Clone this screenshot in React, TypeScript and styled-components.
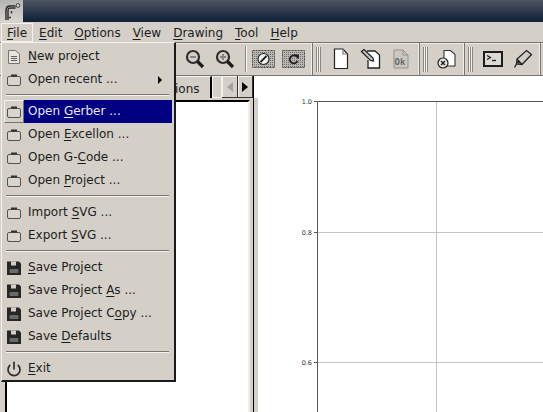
import React from "react";
import styled, { createGlobalStyle } from "styled-components";
import { Power } from "lucide-react";

const GlobalStyle = createGlobalStyle`
  html, body {
    margin: 0;
    padding: 0;
    background: #d4d0c8;
    overflow: hidden;
  }
`;

const Page = styled.div`
  position: relative;
  width: 543px;
  height: 412px;
  display: flex;
  flex-direction: column;
  overflow: hidden;
  background: #d4d0c8;
  color: #1c1c1c;
  font-family: "DejaVu Sans", sans-serif;
  font-size: 12px;
`;

const TitleBar = styled.div`
  height: 22px;
  flex: none;
  background: linear-gradient(#4c5563, #15243a 90%);
`;

const LogoBox = styled.div`
  width: 23px;
  height: 22px;
  display: flex;
  align-items: center;
  justify-content: center;
  background: linear-gradient(#b5b5b3, #d8d5cf);
`;

const MenuBar = styled.div`
  height: 20px;
  flex: none;
  display: flex;
  align-items: center;
  padding-left: 1px;
  box-sizing: border-box;
`;

const MenuTitle = styled.div<{ $open?: boolean }>`
  height: 19px;
  line-height: 18px;
  padding: 0 5px;
  box-sizing: border-box;
  border: 1px solid ${(p) => (p.$open ? "#f4f2ee" : "transparent")};
`;

const Key = styled.span`
  text-decoration: underline;
  text-underline-offset: 2px;
`;

const Toolbar = styled.div`
  height: 34px;
  flex: none;
  display: flex;
  box-sizing: border-box;
  border-top: 1px solid #77756f;
  border-bottom: 1px solid #77756f;
  box-shadow: inset 0 1px 0 #eceae6;
`;

const ToolGroup = styled.div<{ $width: number }>`
  width: ${(p) => p.$width}px;
  flex: none;
  display: flex;
  align-items: center;
  justify-content: flex-end;
  box-sizing: border-box;
  border-right: 1px solid #77756f;
  box-shadow: inset -1px 0 0 #f2f0ec;
`;

const Handle = styled.div`
  width: 5px;
  height: 25px;
  flex: none;
  margin: 0 auto 0 3px;
  background: linear-gradient(
    to right,
    #8a8882 20%,
    #f6f4f0 20% 40%,
    #8a8882 40% 60%,
    #f6f4f0 60% 80%,
    #8a8882 80%
  );
`;

const ToolButton = styled.div<{ $width?: number }>`
  width: ${(p) => p.$width ?? 30}px;
  height: 28px;
  flex: none;
  display: flex;
  align-items: center;
  justify-content: center;
`;

const ToolSeparator = styled.div`
  width: 2px;
  height: 26px;
  flex: none;
  margin: 0 1px 0 5px;
  background: linear-gradient(to right, #8a8882 50%, #f8f7f4 50%);
`;

const Workspace = styled.div`
  flex: 1;
  display: flex;
  min-height: 0;
`;

const LeftPanel = styled.div`
  width: 254px;
  flex: none;
  display: flex;
  flex-direction: column;
  box-sizing: border-box;
  border-right: 1px solid #000;
`;

const TabRow = styled.div`
  height: 22px;
  flex: none;
  display: flex;
  justify-content: flex-end;
`;

const Tab = styled.div`
  width: 70px;
  height: 22px;
  line-height: 24px;
  box-sizing: border-box;
  padding-left: 33px;
  border-top: 1px solid #f4f2ee;
  border-right: 2px solid #000;
  overflow: hidden;
  white-space: nowrap;
`;

const TabStub = styled.div`
  width: 10px;
  height: 22px;
  box-sizing: border-box;
  border: 1px solid #f4f2ee;
  border-bottom-color: #f4f2ee;
`;

const ScrollButton = styled.div<{ $width: number }>`
  width: ${(p) => p.$width}px;
  height: 22px;
  display: flex;
  align-items: center;
  justify-content: center;
  box-sizing: border-box;
  border-bottom: 1px solid #333;
  border-right: 1px solid #333;
  box-shadow: inset 1px 1px 0 #f4f2ee;
`;

const Arrow = styled.div<{ $dim?: boolean; $left?: boolean }>`
  width: 0;
  height: 0;
  border-top: 5px solid transparent;
  border-bottom: 5px solid transparent;
  border-${(p) => (p.$left ? "right" : "left")}: 6px solid
    ${(p) => (p.$dim ? "#a3a19c" : "#000")};
`;

const TreeView = styled.div`
  flex: 1;
  margin: 2px 3px 0 5px;
  background: #fff;
  box-sizing: border-box;
  border-top: 2px solid #000;
  border-left: 2px solid #000;
  border-right: 2px solid #f0eeea;
`;

const PlotArea = styled.div`
  flex: 1;
  min-width: 0;
  display: flex;
  flex-direction: column;
  background: #fff;
`;

const PlotHeader = styled.div`
  height: 22px;
  flex: none;
`;

const PlotBody = styled.div`
  flex: 1;
  min-height: 0;
  border-left: 4px solid #d4d0c8;
  overflow: hidden;
`;

const Menu = styled.div`
  position: absolute;
  left: 1px;
  top: 42px;
  width: 175px;
  height: 340px;
  box-sizing: border-box;
  padding: 2px 2px 0 2px;
  background: #d4d0c8;
  border: 1px solid;
  border-color: #f4f2ee #1a1a1a #1a1a1a #f4f2ee;
  border-width: 1px 2px 2px 1px;
`;

const Row = styled.div`
  height: 23px;
  display: flex;
  align-items: center;
`;

const IconCell = styled.div<{ $raised?: boolean }>`
  width: 20px;
  height: 23px;
  flex: none;
  display: flex;
  align-items: center;
  justify-content: center;
  box-sizing: border-box;
  border: 1px solid ${(p) => (p.$raised ? "#f4f2ee" : "transparent")};
  border-right-color: ${(p) => (p.$raised ? "#77756f" : "transparent")};
  border-bottom-color: ${(p) => (p.$raised ? "#77756f" : "transparent")};
`;

const Label = styled.div<{ $active?: boolean }>`
  flex: 1;
  height: 23px;
  line-height: 23px;
  padding-left: 4px;
  display: flex;
  justify-content: space-between;
  align-items: center;
  white-space: nowrap;
  color: ${(p) => (p.$active ? "#e8e8f4" : "#1c1c1c")};
  background: ${(p) => (p.$active ? "#000080" : "transparent")};
`;

const SubArrow = styled.div`
  width: 0;
  height: 0;
  margin-right: 10px;
  border-top: 4px solid transparent;
  border-bottom: 4px solid transparent;
  border-left: 4px solid #000;
`;

const Separator = styled.div`
  height: 2px;
  margin: 3px 3px 4px 2px;
  background: linear-gradient(#77756f 50%, #f4f2ee 50%);
`;

const TickLabel = styled.text`
  font-family: "DejaVu Sans", sans-serif;
  font-size: 6.5px;
  fill: #333;
  text-anchor: end;
`;

const FolderIcon = () => (
  <svg width="16" height="14" viewBox="0 0 16 14" fill="none">
    <rect x="1.5" y="3.5" width="13" height="9" rx="1.5" fill="#d8d5ce" stroke="#55534f" />
    <rect x="5" y="1.5" width="6" height="2" fill="#33322f" />
  </svg>
);

const DocIcon = () => (
  <svg width="14" height="16" viewBox="0 0 14 16" fill="none">
    <path d="M1.5 1.5 H8.5 L12.5 5 V14.5 H1.5 Z" fill="#e6e4df" stroke="#77756f" />
    <path d="M4 7.5 H10 M4 9.5 H10 M4 11.5 H10" stroke="#5e5c58" />
  </svg>
);

const FloppyIcon = () => (
  <svg width="16" height="16" viewBox="0 0 16 16">
    <path d="M1 1.5 H13 L15 3.5 V15 H1 Z" fill="#262626" />
    <rect x="5" y="1.5" width="5" height="4" fill="#d4d0c8" />
    <rect x="3.5" y="9" width="9" height="4" rx="1" fill="#6a6a68" />
  </svg>
);

const ZoomIcon = ({ plus }: { plus?: boolean }) => (
  <svg width="20" height="20" viewBox="0 0 20 20" fill="none">
    <circle cx="8" cy="8" r="6" stroke="#2e2e2e" strokeWidth="2.2" fill="#d4d0c8" />
    <path d="M12.5 12.5 L18 18" stroke="#1c1c1c" strokeWidth="3.2" />
    <path d={plus ? "M5 8 H11 M8 5 V11" : "M5 8 H11"} stroke="#85837e" strokeWidth="2" />
  </svg>
);

const ScreenIcon = ({ kind }: { kind: "cancel" | "replot" }) => (
  <svg width="23" height="18" viewBox="0 0 23 18" fill="none">
    <defs>
      <pattern id={`stipple-${kind}`} width="2" height="2" patternUnits="userSpaceOnUse">
        <rect width="2" height="2" fill="#b9b7b2" />
        <rect width="1" height="1" fill="#6e6d69" />
      </pattern>
    </defs>
    <rect x="0.5" y="0.5" width="22" height="17" fill={`url(#stipple-${kind})`} stroke="#4a4a48" strokeDasharray="2 1" />
    {kind === "cancel" ? (
      <>
        <circle cx="11.5" cy="9" r="5.5" fill="#f2f2f0" stroke="#222" strokeWidth="1.2" />
        <path d="M8.5 12 L14.5 6" stroke="#222" strokeWidth="1.8" />
      </>
    ) : (
      <path d="M15 7 A4 4 0 1 0 15.5 11 M12.5 5.5 H16 V8.5" stroke="#1c1c1c" strokeWidth="1.8" />
    )}
  </svg>
);

const PageIcon = () => (
  <svg width="16" height="22" viewBox="0 0 16 22" fill="#fff" stroke="#222" strokeWidth="1.2">
    <path d="M1.5 1 H10 L14.5 6 V20.5 H1.5 Z" />
    <path d="M10 1 V6 H14.5" fill="none" stroke="#777" />
  </svg>
);

const EditPageIcon = () => (
  <svg width="22" height="22" viewBox="0 0 22 22" fill="none">
    <path d="M7 3 H15 L19.5 7 V20 H8 V12" fill="#fff" stroke="#222" strokeWidth="1.3" />
    <path d="M1.5 3.5 L4 1.5 L13 10 L13.5 13 L10.5 12.5 Z" fill="#c8c6c0" stroke="#222" strokeWidth="1.3" />
  </svg>
);

const OkPageIcon = () => (
  <svg width="16" height="20" viewBox="0 0 16 20">
    <path d="M1 1 H10 L15 6 V19 H1 Z" fill="#c9c7c1" stroke="#95938d" />
    <path d="M10 1 V6 H15" fill="none" stroke="#95938d" />
    <text x="1.5" y="16" fontFamily="DejaVu Sans Mono" fontWeight="700" fontSize="9" fill="#6b6964">Ok</text>
  </svg>
);

const ClosePageIcon = () => (
  <svg width="20" height="20" viewBox="0 0 20 20" fill="none">
    <path d="M7 10 V1.5 H13.5 L18 5.5 V17 H10" fill="#fff" stroke="#333" strokeWidth="1.1" />
    <circle cx="6" cy="14" r="5" fill="#e8e6e1" stroke="#222" strokeWidth="1.2" />
    <path d="M4 12 L8 16 M8 12 L4 16" stroke="#222" strokeWidth="1.5" />
  </svg>
);

const TerminalIcon = () => (
  <svg width="20" height="16" viewBox="0 0 20 16" fill="none">
    <rect x="1" y="1" width="18" height="14" stroke="#1c1c1c" strokeWidth="2" fill="#dcdad4" />
    <path d="M4 4.5 L7.5 6.5 L4 8.5" stroke="#1c1c1c" strokeWidth="1.2" />
    <path d="M9 9.5 H13" stroke="#1c1c1c" strokeWidth="1.3" />
  </svg>
);

const PenIcon = () => (
  <svg width="20" height="20" viewBox="0 0 20 20" fill="none">
    <path d="M13.5 1.5 L18.5 5.5 L9 15.5 L3.5 15 L4 10 Z" fill="#cfcdc7" stroke="#222" strokeWidth="1.3" />
    <path d="M3.5 15 L1.5 18.5 M4 10 L9 15.5" stroke="#222" strokeWidth="1.3" />
    <circle cx="5.5" cy="13" r="1.5" fill="#222" />
  </svg>
);

const Logo = () => (
  <svg width="18" height="19" viewBox="0 0 18 19" fill="none">
    <path d="M4 18 V8 Q4 5 7 5 H12.5" stroke="#262626" strokeWidth="3.4" />
    <path d="M4 18 V8 Q4 5 7 5 H12.5" stroke="#8f8e8b" strokeWidth="1" />
    <path d="M8 15.5 H6 M8.5 9 V11.5" stroke="#333" strokeWidth="1.4" />
    <circle cx="15" cy="3.5" r="1.8" fill="#e8e6e2" stroke="#333" />
  </svg>
);

type MenuEntry =
  | { sep: true }
  | {
      icon: "folder" | "doc" | "floppy" | "power";
      before: string;
      key: string;
      after: string;
      active?: boolean;
      submenu?: boolean;
    };

const entries: MenuEntry[] = [
  { icon: "doc", before: "", key: "N", after: "ew project" },
  { icon: "folder", before: "Open recent ...", key: "", after: "", submenu: true },
  { sep: true },
  { icon: "folder", before: "Open ", key: "G", after: "erber ...", active: true },
  { icon: "folder", before: "Open ", key: "E", after: "xcellon ..." },
  { icon: "folder", before: "Open G-", key: "C", after: "ode ..." },
  { icon: "folder", before: "Open ", key: "P", after: "roject ..." },
  { sep: true },
  { icon: "folder", before: "Import ", key: "S", after: "VG ..." },
  { icon: "folder", before: "Export ", key: "S", after: "VG ..." },
  { sep: true },
  { icon: "floppy", before: "", key: "S", after: "ave Project" },
  { icon: "floppy", before: "Save Project ", key: "A", after: "s ..." },
  { icon: "floppy", before: "Save Project C", key: "o", after: "py ..." },
  { icon: "floppy", before: "Save ", key: "D", after: "efaults" },
  { sep: true },
  { icon: "power", before: "", key: "E", after: "xit" },
];

const menuTitles = [
  ["F", "ile"],
  ["E", "dit"],
  ["O", "ptions"],
  ["V", "iew"],
  ["D", "rawing"],
  ["T", "ool"],
  ["H", "elp"],
];

function renderIcon(icon: string) {
  if (icon === "doc") return <DocIcon />;
  if (icon === "floppy") return <FloppyIcon />;
  if (icon === "power") return <Power size={16} strokeWidth={2.5} color="#2b2b2b" />;
  return <FolderIcon />;
}

export default function App() {
  return (
    <Page>
      <GlobalStyle />
      <TitleBar>
        <LogoBox>
          <Logo />
        </LogoBox>
      </TitleBar>
      <MenuBar>
        {menuTitles.map(([key, after], i) => (
          <MenuTitle key={key} $open={i === 0}>
            <Key>{key}</Key>
            {after}
          </MenuTitle>
        ))}
      </MenuBar>
      <Toolbar>
        <ToolGroup $width={313}>
          <ToolButton>
            <ZoomIcon />
          </ToolButton>
          <ToolButton>
            <ZoomIcon plus />
          </ToolButton>
          <ToolSeparator />
          <ToolButton>
            <ScreenIcon kind="cancel" />
          </ToolButton>
          <ToolButton>
            <ScreenIcon kind="replot" />
          </ToolButton>
          <ToolButton $width={4} />
        </ToolGroup>
        <ToolGroup $width={107}>
          <Handle />
          <ToolButton>
            <PageIcon />
          </ToolButton>
          <ToolButton>
            <EditPageIcon />
          </ToolButton>
          <ToolButton>
            <OkPageIcon />
          </ToolButton>
          <ToolButton $width={3} />
        </ToolGroup>
        <ToolGroup $width={45}>
          <Handle />
          <ToolButton>
            <ClosePageIcon />
          </ToolButton>
          <ToolButton $width={2} />
        </ToolGroup>
        <ToolGroup $width={76}>
          <Handle />
          <ToolButton>
            <TerminalIcon />
          </ToolButton>
          <ToolButton>
            <PenIcon />
          </ToolButton>
          <ToolButton $width={2} />
        </ToolGroup>
      </Toolbar>
      <Workspace>
        <LeftPanel>
          <TabRow>
            <Tab>ions</Tab>
            <TabStub />
            <ScrollButton $width={16}>
              <Arrow $left $dim />
            </ScrollButton>
            <ScrollButton $width={15}>
              <Arrow />
            </ScrollButton>
          </TabRow>
          <TreeView />
        </LeftPanel>
        <PlotArea>
          <PlotHeader />
          <PlotBody>
            <svg width="285" height="314" viewBox="0 0 285 314">
              <path d="M178.5 3 V314 M59 134.5 H285 M59 264.5 H285" stroke="#c4c4c4" />
              <path d="M59.5 314 V3.5 H285" stroke="#555" fill="none" />
              <path d="M56 3.5 H59 M56 134.5 H59 M56 264.5 H59" stroke="#555" />
              <TickLabel x="54" y="5.5">1.0</TickLabel>
              <TickLabel x="54" y="136.5">0.8</TickLabel>
              <TickLabel x="54" y="266.5">0.6</TickLabel>
            </svg>
          </PlotBody>
        </PlotArea>
      </Workspace>
      <Menu>
        {entries.map((entry, i) =>
          "sep" in entry ? (
            <Separator key={i} />
          ) : (
            <Row key={i}>
              <IconCell $raised={entry.active}>{renderIcon(entry.icon)}</IconCell>
              <Label $active={entry.active}>
                <span>
                  {entry.before}
                  {entry.key && <Key>{entry.key}</Key>}
                  {entry.after}
                </span>
                {entry.submenu && <SubArrow />}
              </Label>
            </Row>
          )
        )}
      </Menu>
    </Page>
  );
}
